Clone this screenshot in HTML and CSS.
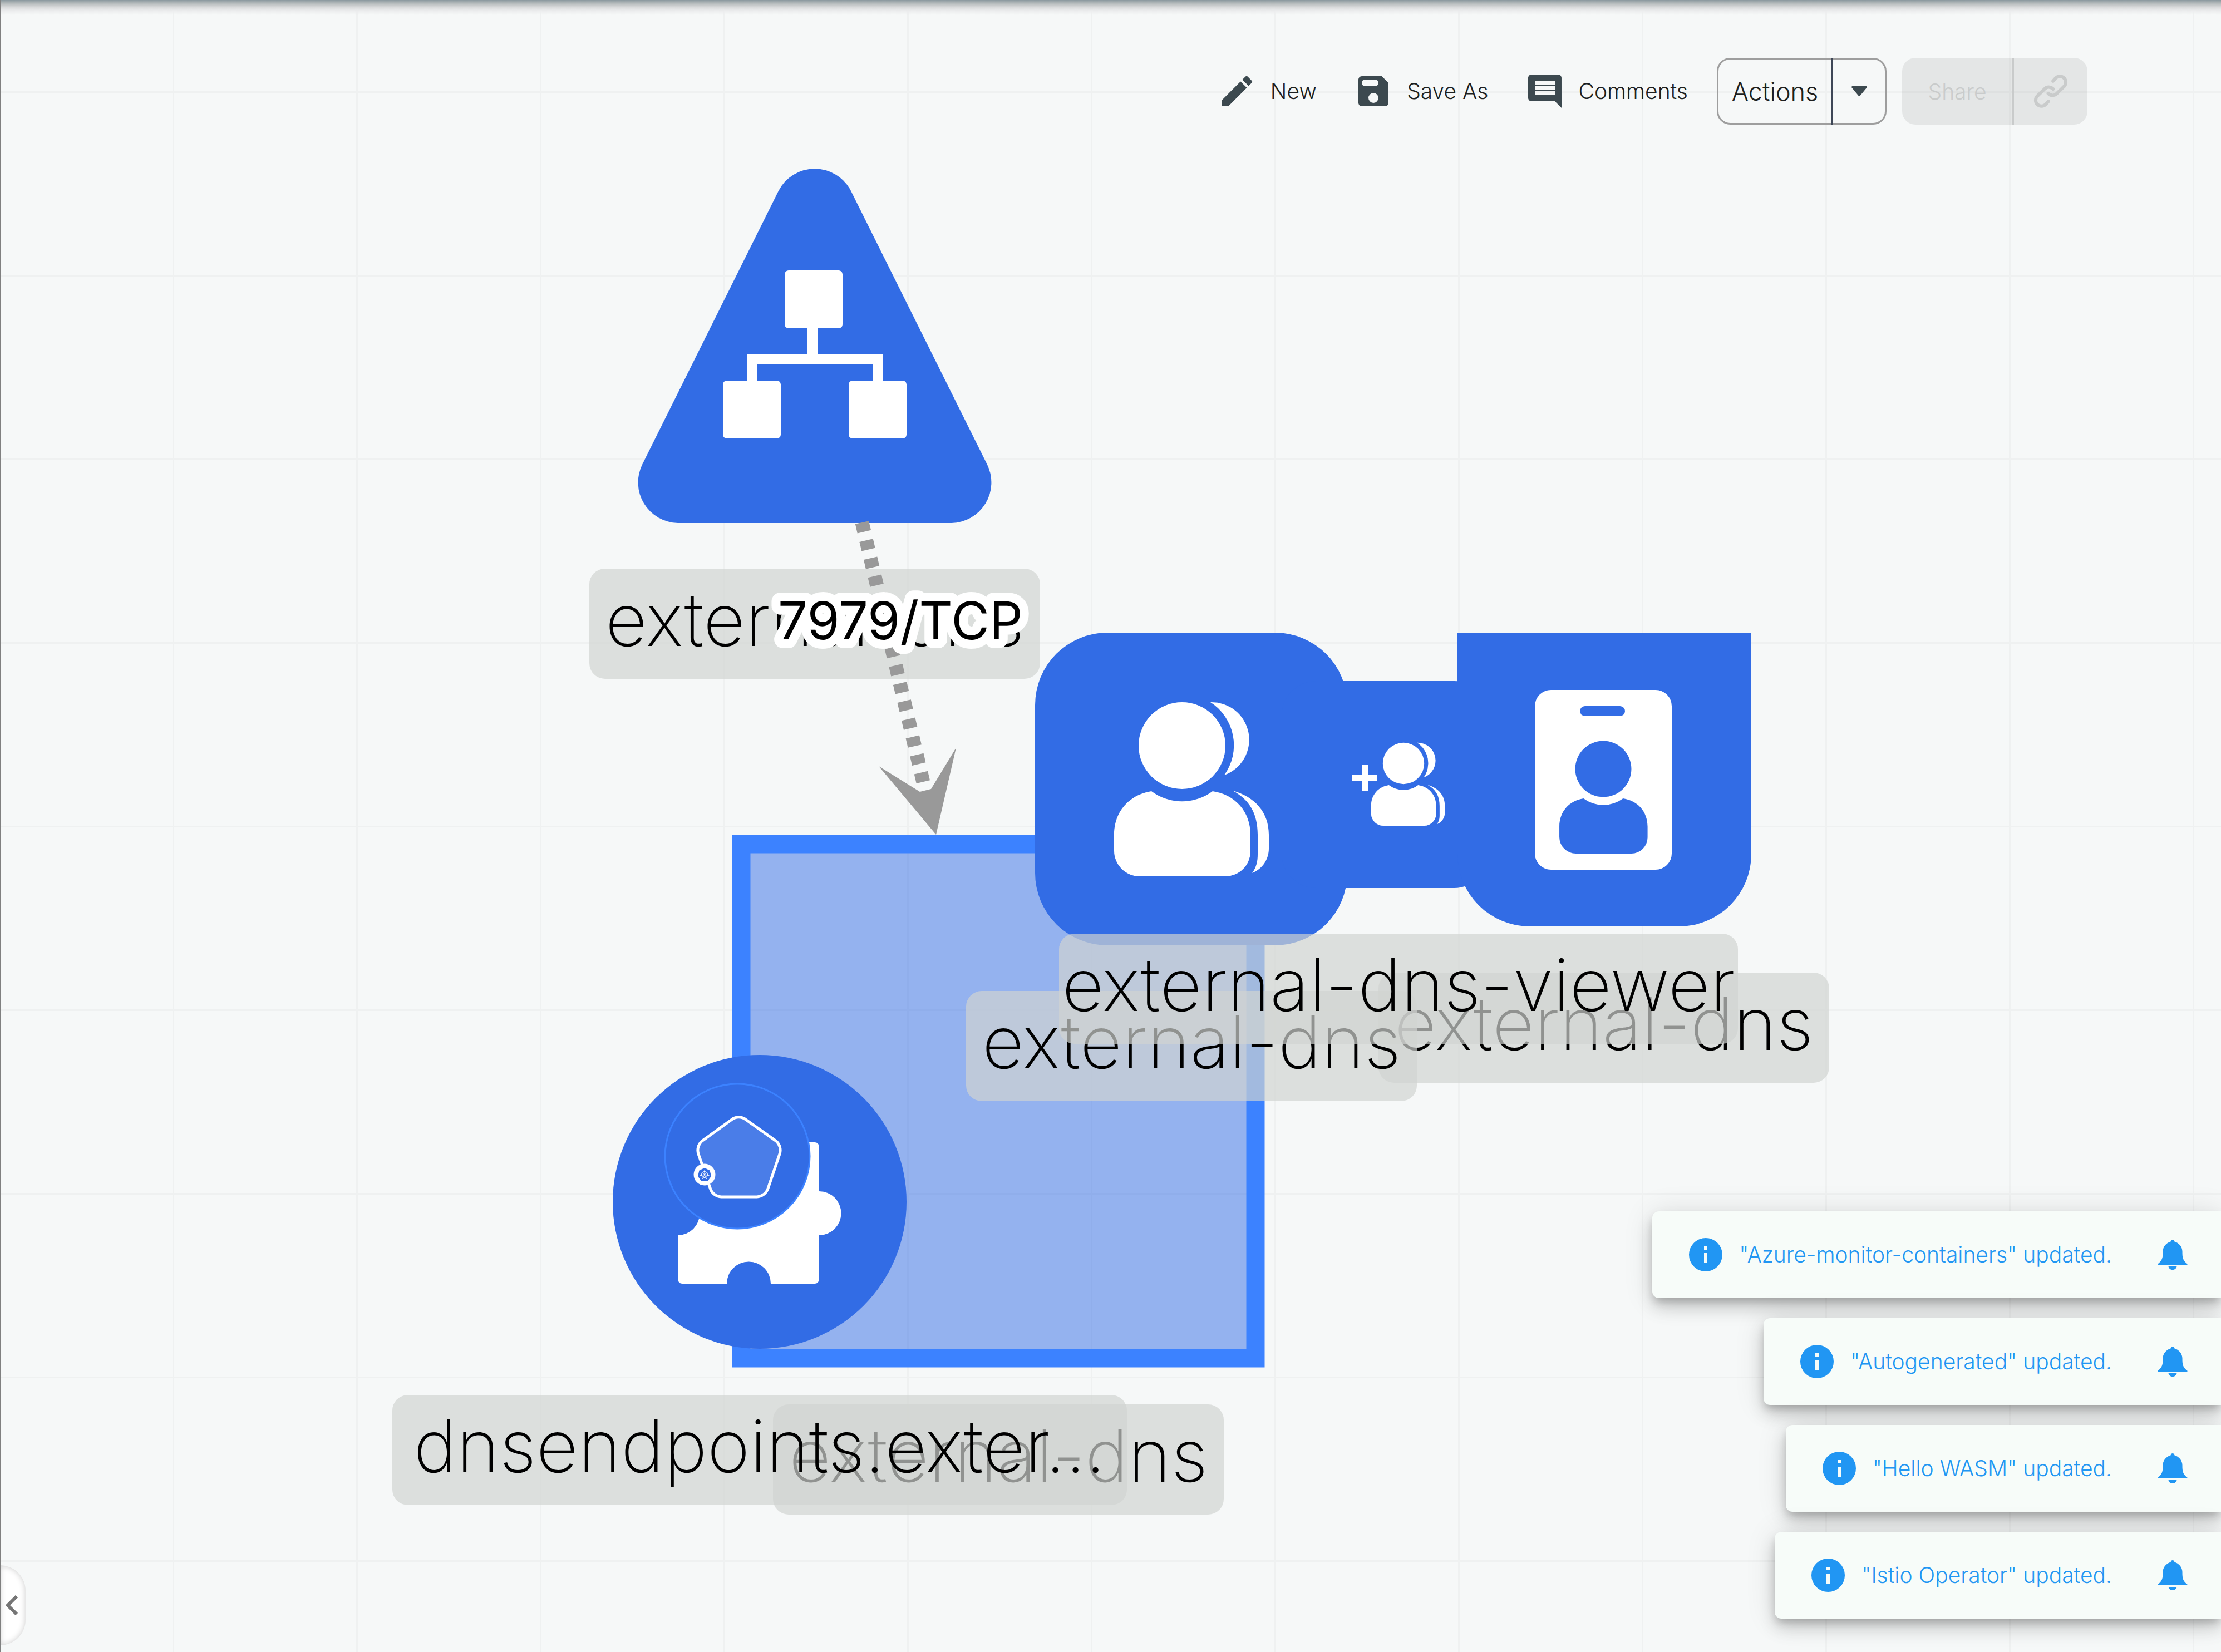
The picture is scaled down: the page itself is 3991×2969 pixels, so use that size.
FILE: index.html
```html
<!DOCTYPE html>
<html lang="en">
<head>
<meta charset="utf-8">
<title>Design canvas</title>
<link rel="stylesheet" href="styles.css">
</head>
<body>
<main class="workspace">
  <section class="canvas" aria-label="Design canvas">
    <svg class="layer" width="3400" height="2600" viewBox="0 0 3400 2600" aria-hidden="true">
      <defs>
        <g id="person">
          <circle cx="0" cy="0" r="78"/>
          <path d="M-55 82C-94 88-122 118-122 160V189A46 46 0 0 0-76 235H78A45 45 0 0 0 123 190V160C123 118 95 88 55 82A92 92 0 0 1-55 82Z"/>
        </g>
        <g id="group">
          <use href="#person"/>
          <path d="M51-78A67.500 67.500 0 0 1 76 53A92 92 0 0 0 51-78Z"/>
          <path d="M91 81C131 92 156 120 156 160V185C156 205 144 222 126 229C134 218 136 208 136 195V160C136 122 121 97 91 81Z"/>
        </g>
      </defs>
      <rect class="namespace" x="1332" y="1517" width="924" height="924"/>
      <g class="shape">
        <path d="M1399 343A73 73 0 0 1 1529 343L1774 835A73 73 0 0 1 1710 940H1218A73 73 0 0 1 1154 835Z"/>
        <circle cx="1365" cy="2160" r="264"/>
        <rect x="1860" y="1137" width="561" height="562" rx="130"/>
        <rect x="2303" y="1224" width="372" height="372" rx="62"/>
        <path d="M2619 1137H3147V1535A130 130 0 0 1 3017 1665H2749A130 130 0 0 1 2619 1535Z"/>
      </g>
      <g class="glyph">
        <rect x="1410" y="486" width="104" height="104" rx="7"/>
        <rect x="1299" y="684" width="104" height="104" rx="7"/>
        <rect x="1525" y="684" width="104" height="104" rx="7"/>
        <path d="M1451 588h18v48h117v50h-18v-32h-207v32h-18v-50h108z"/>
        <use href="#group" x="2124" y="1340"/>
        <use href="#group" transform="translate(2522 1372) scale(.477)"/>
        <path d="M2447 1375h11v18h17v11h-17v17h-11v-17h-17v-11h17z"/>
        <rect x="2758" y="1240" width="246" height="323" rx="29"/>
        <path d="M1226 2053H1464A8 8 0 0 1 1472 2061V2141A39 39 0 0 1 1472 2220V2299A8 8 0 0 1 1464 2307H1385A39 39 0 0 0 1306 2307H1226A8 8 0 0 1 1218 2299V2220A39 39 0 0 0 1218 2141V2061A8 8 0 0 1 1226 2053Z"/>
      </g>
      <g class="shape">
        <rect x="2839" y="1269" width="81" height="18" rx="9"/>
        <use href="#person" transform="translate(2881 1382) scale(.647)"/>
        <circle class="ring" cx="1325" cy="2078" r="130"/>
      </g>
      <path class="pentagon" d="M1315 2012A21 21 0 0 1 1340 2012L1395 2051A22 22 0 0 1 1401 2074L1380 2136A22 22 0 0 1 1360 2151H1296A22 22 0 0 1 1276 2135L1255 2074A22 22 0 0 1 1261 2051Z"/>
      <circle class="glyph" cx="1266" cy="2111" r="19.500"/>
      <path class="shape" d="M1266 2099L1275.500 2103.500L1278 2114L1271.500 2123H1260.500L1254 2114L1256.500 2103.500Z"/>
      <g class="helm">
        <circle cx="1266" cy="2111" r="5.500"/>
        <path d="M1266 2111V2102M1266 2111L1273 2105.400M1266 2111L1274.800 2113M1266 2111L1270 2119.100M1266 2111L1262 2119.100M1266 2111L1257.200 2113M1266 2111L1259 2105.400"/>
      </g>
    </svg>

    <div class="label label-service">external-dns</div>
    <div class="label label-namespace">external-dns</div>
    <div class="label label-crd">dnsendpoints.exter...</div>
    <div class="label label-account">external-dns</div>
    <div class="label label-role">external-dns</div>
    <div class="label label-binding">external-dns-viewer</div>

    <svg class="layer" width="3400" height="2600" viewBox="0 0 3400 2600">
      <path class="edge" d="M1549 939L1659 1406"/>
      <path class="edge-head" d="M1682 1500L1579 1377L1653 1423L1673 1418L1718 1344Z"/>
      <text class="edge-label" x="1618" y="1149">7979/TCP</text>
    </svg>
  </section>

  <header class="toolbar">
    <div class="links">
      <button class="tool" type="button">
        <svg class="icon" viewBox="0 0 24 24" aria-hidden="true"><path d="M3 17.250V21h3.750L17.810 9.940l-3.750-3.750L3 17.250zM20.710 7.040a1 1 0 0 0 0-1.410l-2.340-2.340a1 1 0 0 0-1.410 0l-1.830 1.830 3.750 3.750 1.830-1.830z"/></svg>
        <span>New</span>
      </button>
      <button class="tool" type="button">
        <svg class="icon" viewBox="0 0 24 24" aria-hidden="true"><path fill-rule="evenodd" d="M17 3H5a2 2 0 0 0-2 2v14a2 2 0 0 0 2 2h14a2 2 0 0 0 2-2V7l-4-4zm-5 16a3 3 0 1 1 0-6 3 3 0 0 1 0 6zM7 5h6a2 2 0 0 1 0 4H7a2 2 0 0 1 0-4z"/></svg>
        <span>Save As</span>
      </button>
      <button class="tool" type="button">
        <svg class="icon" viewBox="0 0 24 24" aria-hidden="true"><path d="M21.990 4c0-1.100-.89-2-1.990-2H4c-1.100 0-2 .9-2 2v12c0 1.100.9 2 2 2h14l4 4-.01-18zM18 14H6v-2h12v2zm0-3H6V9h12v2zm0-3H6V6h12v2z"/></svg>
        <span>Comments</span>
      </button>
    </div>
    <div class="split actions">
      <button class="main" type="button">Actions</button>
      <button class="more" type="button" aria-label="More actions">
        <svg class="caret" viewBox="0 0 28 18" aria-hidden="true"><path d="M1.500 0h25a1.500 1.500 0 0 1 1 2.500L15.500 17a2 2 0 0 1-3 0L.5 2.500A1.500 1.500 0 0 1 1.500 0z"/></svg>
      </button>
    </div>
    <div class="split share">
      <button class="main" type="button" disabled>Share</button>
      <button class="more" type="button" aria-label="Copy link" disabled>
        <svg class="icon" viewBox="0 0 24 24" aria-hidden="true"><path class="chain" d="M13.400 5.900L15 4.100A3.500 3.500 0 0 1 20 9.100L15.400 13.600A3.500 3.500 0 0 1 10.500 13.300M10.600 18.100L9 19.900A3.500 3.500 0 0 1 4 14.900L8.600 10.400A3.500 3.500 0 0 1 13.500 10.700"/></svg>
      </button>
    </div>
  </header>

  <button class="drawer" type="button" aria-label="Open panel">
    <svg class="chevron" viewBox="0 0 22 36" aria-hidden="true"><path d="M20 2L4 18L20 34"/></svg>
  </button>

  <ul class="toasts">
    <li class="toast">
      <svg class="icon" viewBox="0 0 24 24" aria-hidden="true"><path d="M12 2a10 10 0 1 0 0 20 10 10 0 0 0 0-20zm1 15h-2v-6h2v6zm0-8h-2V7h2v2z"/></svg>
      <span class="message">"Istio Operator" updated.</span>
      <button class="bell" type="button" aria-label="Notifications"><svg viewBox="0 0 53 54" aria-hidden="true"><path d="M26.500 0C28.500 0 29.500 1.500 30 3.600C38 6 44 13 44 21C44 33 45 37 53 43.500V45H0V43.500C8 37 9 33 9 21C9 13 15 6 23 3.600C23.500 1.500 24.500 0 26.500 0ZM19 48h15c-1 4-4 6-7.500 6s-6.500-2-7.500-6z"/></svg></button>
    </li>
    <li class="toast">
      <svg class="icon" viewBox="0 0 24 24" aria-hidden="true"><path d="M12 2a10 10 0 1 0 0 20 10 10 0 0 0 0-20zm1 15h-2v-6h2v6zm0-8h-2V7h2v2z"/></svg>
      <span class="message">"Hello WASM" updated.</span>
      <button class="bell" type="button" aria-label="Notifications"><svg viewBox="0 0 53 54" aria-hidden="true"><path d="M26.500 0C28.500 0 29.500 1.500 30 3.600C38 6 44 13 44 21C44 33 45 37 53 43.500V45H0V43.500C8 37 9 33 9 21C9 13 15 6 23 3.600C23.500 1.500 24.500 0 26.500 0ZM19 48h15c-1 4-4 6-7.500 6s-6.500-2-7.500-6z"/></svg></button>
    </li>
    <li class="toast">
      <svg class="icon" viewBox="0 0 24 24" aria-hidden="true"><path d="M12 2a10 10 0 1 0 0 20 10 10 0 0 0 0-20zm1 15h-2v-6h2v6zm0-8h-2V7h2v2z"/></svg>
      <span class="message">"Autogenerated" updated.</span>
      <button class="bell" type="button" aria-label="Notifications"><svg viewBox="0 0 53 54" aria-hidden="true"><path d="M26.500 0C28.500 0 29.500 1.500 30 3.600C38 6 44 13 44 21C44 33 45 37 53 43.500V45H0V43.500C8 37 9 33 9 21C9 13 15 6 23 3.600C23.500 1.500 24.500 0 26.500 0ZM19 48h15c-1 4-4 6-7.500 6s-6.500-2-7.500-6z"/></svg></button>
    </li>
    <li class="toast">
      <svg class="icon" viewBox="0 0 24 24" aria-hidden="true"><path d="M12 2a10 10 0 1 0 0 20 10 10 0 0 0 0-20zm1 15h-2v-6h2v6zm0-8h-2V7h2v2z"/></svg>
      <span class="message">"Azure-monitor-containers" updated.</span>
      <button class="bell" type="button" aria-label="Notifications"><svg viewBox="0 0 53 54" aria-hidden="true"><path d="M26.500 0C28.500 0 29.500 1.500 30 3.600C38 6 44 13 44 21C44 33 45 37 53 43.500V45H0V43.500C8 37 9 33 9 21C9 13 15 6 23 3.600C23.500 1.500 24.500 0 26.500 0ZM19 48h15c-1 4-4 6-7.500 6s-6.500-2-7.500-6z"/></svg></button>
    </li>
  </ul>
</main>
</body>
</html>
```
FILE: styles.css
```css
* {
  box-sizing: border-box;
}

body {
  margin: 0;
  font-family: Inter, "Liberation Sans", sans-serif;
  font-weight: 300;
  color: #1d1f1f;
}

button {
  margin: 0;
  padding: 0;
  border: 0;
  background: none;
  font: inherit;
  color: inherit;
}

/* Workspace with its faint grid */
.workspace {
  position: relative;
  min-height: 100vh;
  overflow: hidden;
  border-left: 1px solid #808080;
  background-color: #f6f8f8;
  background-image:
    linear-gradient(#eff1f1 3px, transparent 3px),
    linear-gradient(90deg, #eff1f1 3px, transparent 3px);
  background-size: 330px 330px;
  background-position: 309px 164px;
}

.workspace::before {
  content: "";
  position: absolute;
  inset: 0 0 auto;
  height: 27px;
  background: linear-gradient(#8b999f, #b4babb 22%, #d9dadb 48%, #ecedee 72%, transparent);
}

/* Free canvas */
.canvas {
  position: absolute;
  inset: 0 0 0 -1px;
}

.layer {
  position: absolute;
  top: 0;
  left: 0;
}

.shape {
  fill: #326ce5;
}

.glyph {
  fill: #fff;
}

.namespace {
  fill: rgba(50, 108, 229, 0.5);
  stroke: #3c82ff;
  stroke-width: 33px;
}

.ring {
  stroke: #3c82ff;
  stroke-width: 3px;
}

.pentagon {
  fill: rgba(255, 255, 255, 0.12);
  stroke: #fff;
  stroke-width: 5px;
}

.helm {
  fill: none;
  stroke: #fff;
  stroke-width: 1px;
}

.edge {
  stroke: #999;
  stroke-width: 25px;
  stroke-dasharray: 17 16;
}

.edge-head {
  fill: #999;
}

.label {
  position: absolute;
  display: flex;
  justify-content: center;
  width: 810px;
  padding-bottom: 14px;
  border-radius: 28px;
  background: rgba(209, 212, 208, 0.69);
  color: #000;
  font-size: 131px;
  font-weight: 200;
  line-height: 184px;
  white-space: nowrap;
}

.label-service {
  left: 1059px;
  top: 1022px;
}

.label-namespace {
  left: 1389px;
  top: 2524px;
}

.label-crd {
  left: 705px;
  top: 2507px;
  width: 1320px;
}

.label-account {
  left: 2477px;
  top: 1748px;
}

.label-role {
  left: 1736px;
  top: 1781px;
}

.label-binding {
  left: 1903px;
  top: 1678px;
  width: 1220px;
}

.edge-label {
  fill: #000;
  stroke: #fff;
  stroke-width: 32px;
  stroke-linejoin: round;
  paint-order: stroke fill;
  font-size: 94px;
  font-weight: 400;
  text-anchor: middle;
}

/* Toolbar */
.toolbar {
  position: relative;
  display: flex;
  justify-content: flex-end;
  align-items: center;
  gap: 28px;
  padding: 104px 240px 0 0;
}

.icon {
  flex: none;
  width: 72px;
  height: 72px;
  fill: currentColor;
}

.links {
  display: flex;
  gap: 66px;
  margin-right: 24px;
}

.tool {
  display: flex;
  align-items: center;
  gap: 24px;
  font-size: 39px;
  line-height: 72px;
}

.tool .icon {
  color: #3c494f;
}

.split {
  display: flex;
  height: 120px;
  border-radius: 24px;
}

.split button {
  display: flex;
  align-items: center;
  justify-content: center;
}

.actions {
  border: 3px solid #9e9e9e;
  font-size: 45px;
}

.actions .main {
  width: 203px;
}

.actions .more {
  width: 96px;
  margin: -3px 0;
  border-left: 3px solid #3e4757;
}

.caret {
  width: 28px;
  height: 18px;
  fill: #3c494f;
}

.share {
  background: rgba(0, 0, 0, 0.07);
  color: #c9cbcb;
  font-size: 39px;
}

.share .main {
  width: 198px;
}

.share .more {
  width: 135px;
  border-left: 3px solid #c9cbcb;
}

.chain {
  fill: none;
  stroke: currentColor;
  stroke-width: 2;
  stroke-linecap: round;
}

/* Side drawer handle */
.drawer {
  position: absolute;
  left: -1px;
  bottom: 12px;
  display: flex;
  align-items: center;
  width: 46px;
  height: 144px;
  padding-left: 10px;
  border-radius: 0 48px 48px 0;
  background: #fff;
  box-shadow: inset 0 0 12px rgba(0, 0, 0, 0.2);
}

.chevron {
  width: 22px;
  height: 36px;
  fill: none;
  stroke: #757575;
  stroke-width: 6px;
}

/* Notifications */
.toasts {
  position: absolute;
  right: 0;
  bottom: 60px;
  display: flex;
  flex-direction: column-reverse;
  align-items: flex-end;
  gap: 36px;
  margin: 0;
  padding: 0;
  list-style: none;
}

.toast {
  display: flex;
  align-items: center;
  padding: 42px 60px;
  border-radius: 12px 0 0 12px;
  background: #f7fcf9;
  color: #2196f3;
  font-size: 39px;
  line-height: 72px;
  box-shadow:
    0 9px 15px -3px rgba(0, 0, 0, 0.2),
    0 18px 30px rgba(0, 0, 0, 0.14),
    0 3px 54px rgba(0, 0, 0, 0.12);
}

.message {
  margin: 0 82px 0 24px;
  white-space: nowrap;
}

.bell {
  display: flex;
}

.bell svg {
  width: 54px;
  height: 54px;
  fill: currentColor;
}
```
